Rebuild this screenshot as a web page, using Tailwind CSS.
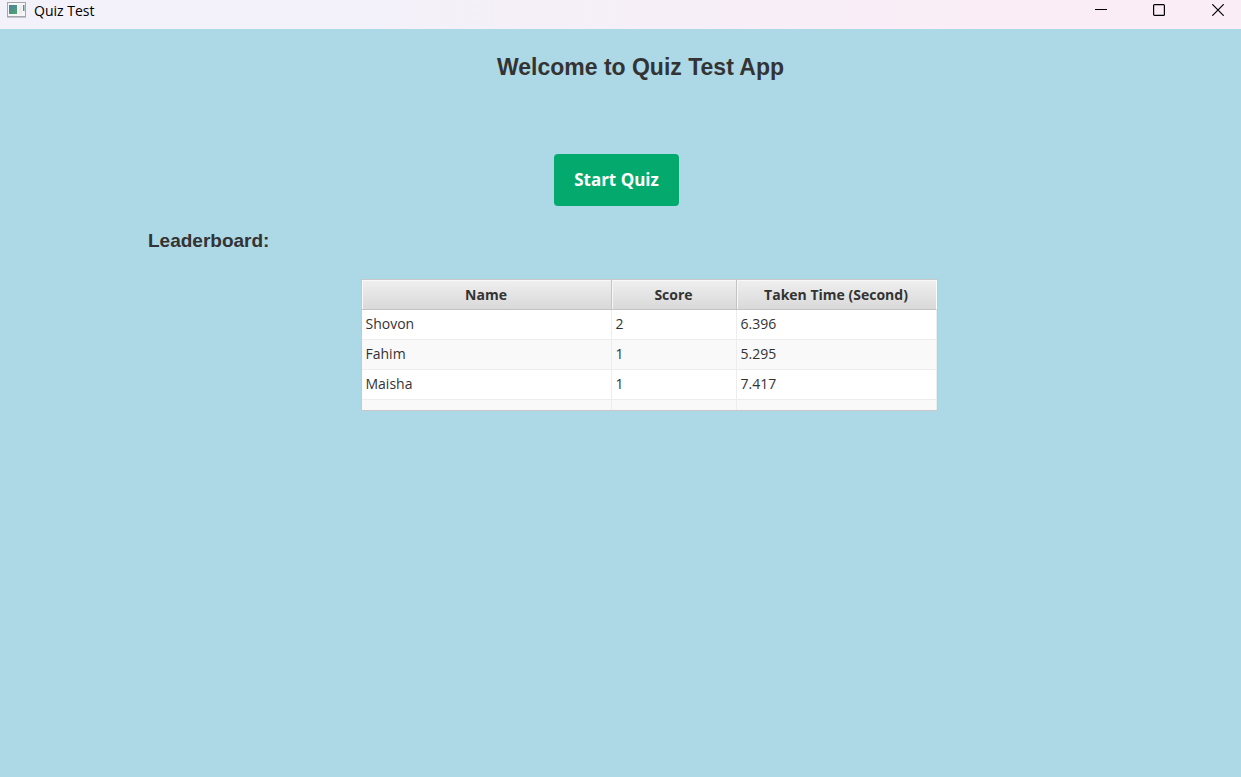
<!DOCTYPE html>
<html lang="en">
<head>
<meta charset="utf-8">
<title>Quiz Test</title>
<script src="https://cdn.jsdelivr.net/npm/@tailwindcss/browser@4"></script>
</head>
<body class="flex min-h-screen flex-col bg-[#add8e6] font-['Open_Sans',sans-serif] text-[#333333]">
  <header class="flex h-[29px] items-start justify-between bg-linear-to-r from-[#f3f1f9] from-30% to-[#faedf6] to-80% text-black">
    <div class="flex items-start gap-2 pt-[2px] pl-[7px]">
      <svg class="h-4 w-[19px]" viewBox="0 0 19 16" aria-hidden="true">
        <defs>
          <linearGradient id="pane" x1="0" y1="0" x2="1" y2="1"><stop offset="0" stop-color="#4a7fa5"/><stop offset="1" stop-color="#4fa866"/></linearGradient>
        </defs>
        <rect x="0.5" y="0.5" width="18" height="14" fill="#f6f6f6" stroke="#a3a8ad"/>
        <path d="M0 15.5h19" stroke="#c4c6ca"/>
        <rect x="2" y="3" width="8" height="9" fill="url(#pane)"/>
        <rect x="12" y="3" width="3" height="9" fill="#e9eef0"/>
        <rect x="16" y="3" width="1.5" height="6" fill="#5b9290"/>
      </svg>
      <span class="text-[14px] leading-[18px]">Quiz Test</span>
    </div>
    <div class="flex h-5">
      <button type="button" aria-label="Minimize" class="flex w-[58px] items-center justify-center"><svg class="size-3" viewBox="0 0 12 12"><path d="M0 5.5h12" stroke="#000"/></svg></button>
      <button type="button" aria-label="Maximize" class="flex w-[58px] items-center justify-center"><svg class="size-3" viewBox="0 0 12 12"><rect x="0.6" y="0.6" width="10.8" height="10.8" rx="1" fill="none" stroke="#000" stroke-width="1.2"/></svg></button>
      <button type="button" aria-label="Close" class="flex w-[53px] items-center justify-center pl-[7px]"><svg class="size-3" viewBox="0 0 12 12"><path d="M0.3 0.3l11.4 11.4M11.7 0.3L0.3 11.7" stroke="#000" stroke-width="1.2"/></svg></button>
    </div>
  </header>

  <main class="flex flex-1 flex-col">
    <h1 class="pt-6 pl-10 text-center font-['Liberation_Sans',sans-serif] text-[23px] leading-7 font-bold">Welcome to Quiz Test App</h1>
    <div class="flex justify-center pt-[73px] pr-2">
      <button type="button" class="rounded-[4px] bg-[#04aa6d] px-5 py-3 text-[17px] leading-7 font-bold text-white">Start Quiz</button>
    </div>
    <h2 class="pt-[23px] pl-[148px] font-['Liberation_Sans',sans-serif] text-[19px] leading-6 font-bold">Leaderboard:</h2>
    <div class="flex justify-center pt-[26px] pl-[57px]">
      <div class="border border-[#c8c8c8] bg-white">
        <table class="table-fixed border-separate border-spacing-0 text-[14px] leading-5">
          <thead>
            <tr class="h-[30px]">
              <th scope="col" class="w-[250px] border-r border-b border-[#c3c3c3] bg-linear-to-b from-[#efefef] to-[#d9d9d9] p-0 font-bold shadow-[inset_1px_1px_0_#f8f8f8]">Name</th>
              <th scope="col" class="w-[125px] border-r border-b border-[#c3c3c3] bg-linear-to-b from-[#efefef] to-[#d9d9d9] p-0 font-bold shadow-[inset_1px_1px_0_#f8f8f8]">Score</th>
              <th scope="col" class="w-[200px] border-r border-b border-r-white border-b-[#c3c3c3] bg-linear-to-b from-[#efefef] to-[#d9d9d9] p-0 font-bold shadow-[inset_1px_1px_0_#f8f8f8]">Taken Time (Second)</th>
            </tr>
          </thead>
          <tbody class="[&_td]:border-r [&_td]:border-b [&_td]:border-[#ededed] [&_td]:px-1 [&_td]:pt-0 [&_td]:pb-[2px]">
            <tr class="h-[30px]"><td>Shovon</td><td>2</td><td>6.396</td></tr>
            <tr class="h-[30px] bg-[#f9f9f9]"><td>Fahim</td><td>1</td><td>5.295</td></tr>
            <tr class="h-[30px]"><td>Maisha</td><td>1</td><td>7.417</td></tr>
            <tr class="h-[10px] bg-[#f9f9f9]"><td class="border-b-0!"></td><td class="border-b-0!"></td><td class="border-b-0!"></td></tr>
          </tbody>
        </table>
      </div>
    </div>
  </main>
</body>
</html>
